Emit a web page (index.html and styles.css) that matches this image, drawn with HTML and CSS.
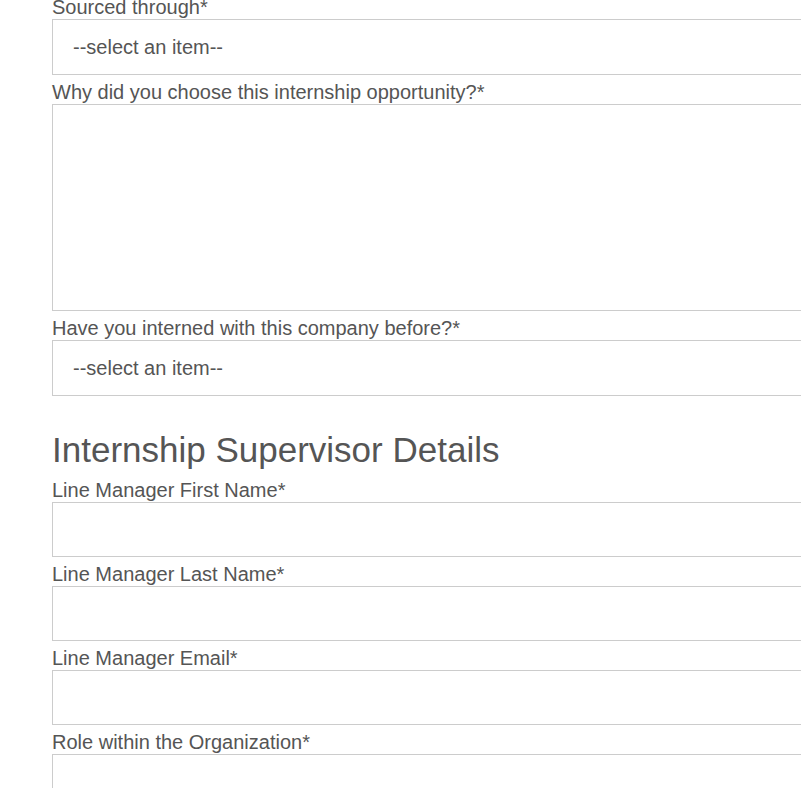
FILE: index.html
```html
<!DOCTYPE html>
<html>
<head>
<meta charset="utf-8">
<link rel="stylesheet" href="styles.css">
</head>
<body>
<form class="form">
  <div class="field">
    <label class="label">Sourced through*</label>
    <div class="select">--select an item--</div>
  </div>
  <div class="field">
    <label class="label">Why did you choose this internship opportunity?*</label>
    <div class="textarea"></div>
  </div>
  <div class="field">
    <label class="label">Have you interned with this company before?*</label>
    <div class="select">--select an item--</div>
  </div>
  <h2 class="heading">Internship Supervisor Details</h2>
  <div class="field">
    <label class="label">Line Manager First Name*</label>
    <div class="input"></div>
  </div>
  <div class="field">
    <label class="label">Line Manager Last Name*</label>
    <div class="input"></div>
  </div>
  <div class="field">
    <label class="label">Line Manager Email*</label>
    <div class="input"></div>
  </div>
  <div class="field">
    <label class="label">Role within the Organization*</label>
    <div class="input"></div>
  </div>
</form>
</body>
</html>
```
FILE: styles.css
```css
html, body {
  margin: 0;
  padding: 0;
  background: #fff;
  overflow: hidden;
}
body {
  font-family: "Liberation Sans", Arial, sans-serif;
  color: #555;
}
.form {
  margin-top: -3px;
  padding-left: 52px;
  display: flex;
  flex-direction: column;
}
.field {
  display: flex;
  flex-direction: column;
  margin-bottom: 7px;
}
.label {
  font-size: 20px;
  line-height: 20px;
  padding-bottom: 2px;
  display: block;
}
.select, .input, .textarea {
  box-sizing: border-box;
  width: 780px;
  border: 1px solid #ccc;
  background: #fff;
}
.select {
  height: 56px;
  padding: 0 20px;
  font-size: 20px;
  display: flex;
  align-items: center;
  color: #555;
}
.textarea {
  height: 207px;
}
.input {
  height: 55px;
}
.heading {
  font-size: 35px;
  font-weight: normal;
  line-height: 38px;
  margin: 28px 0 11px;
}
```
